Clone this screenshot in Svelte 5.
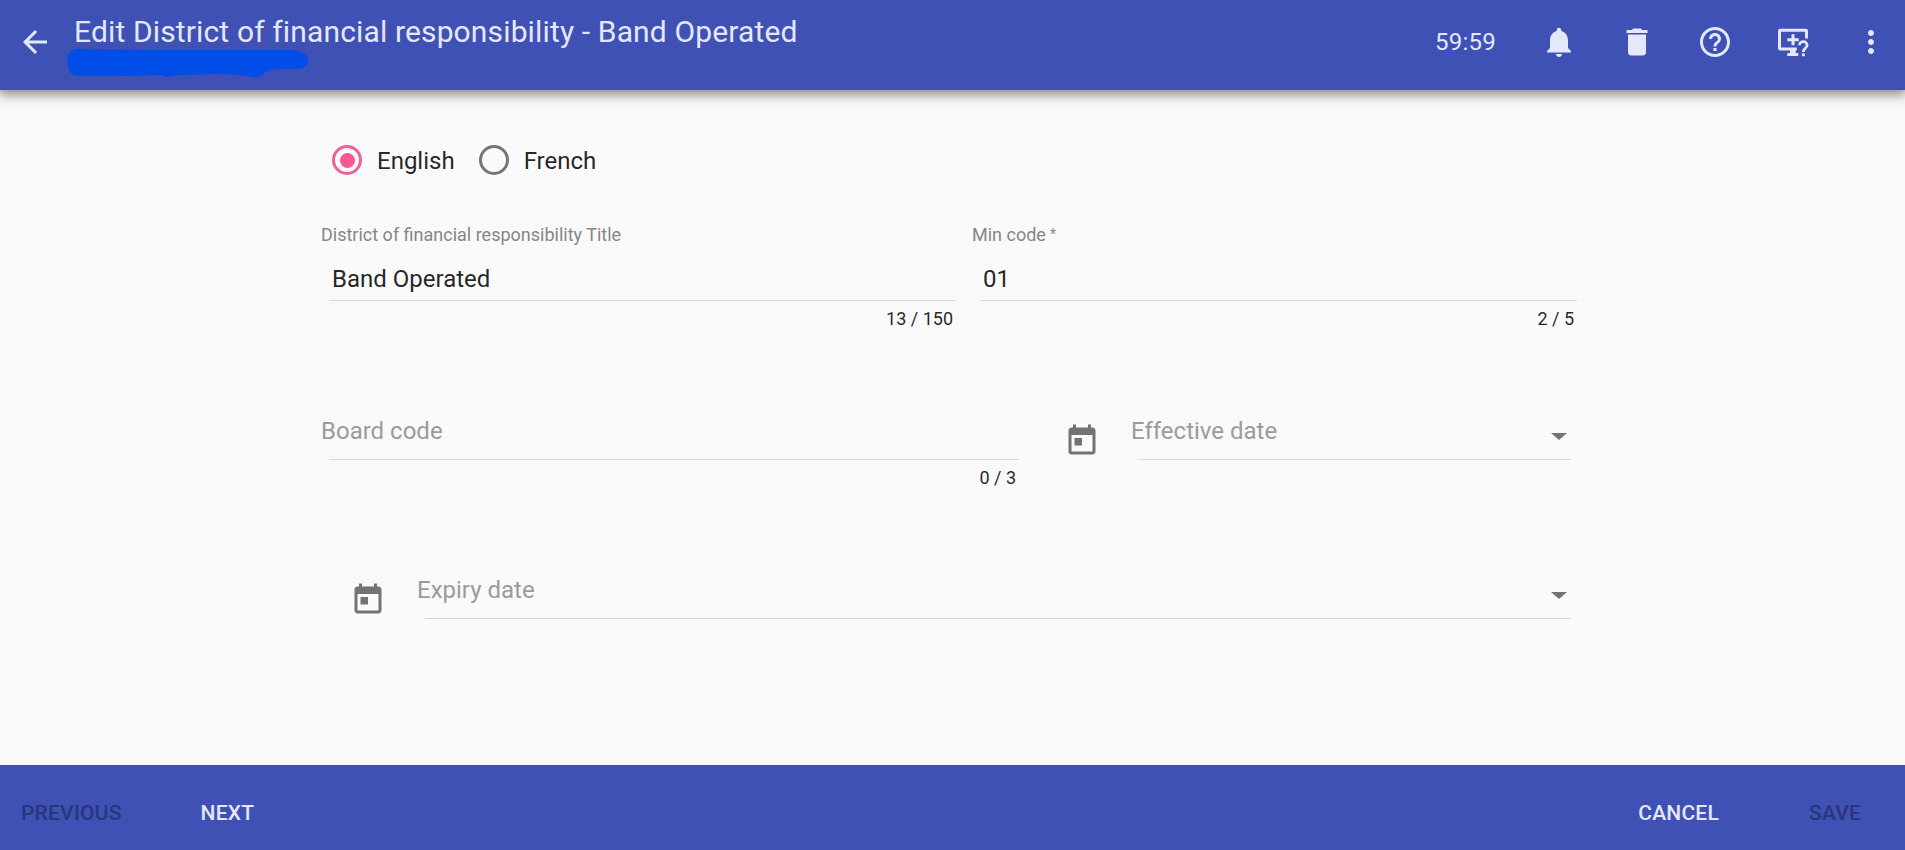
<script>
  const language = 'English';
  const languages = ['English', 'French'];
</script>

{#snippet calendar()}
  <svg class="calendar" viewBox="0 0 24 24"><path d="M19 3h-1V1h-2v2H8V1H6v2H5c-1.11 0-1.99.9-1.99 2L3 19c0 1.1.89 2 2 2h14c1.1 0 2-.9 2-2V5c0-1.1-.9-2-2-2zm0 16H5V8h14v11zM7 10h5v5H7z" /></svg>
{/snippet}

<div class="page">
  <header>
    <svg class="icon back" viewBox="0 0 24 24"><path d="M20 11H7.83l5.59-5.59L12 4l-8 8 8 8 1.41-1.41L7.83 13H20v-2z" /></svg>
    <div class="heading">
      <h1>Edit District of financial responsibility - Band Operated</h1>
      <svg class="marker" viewBox="0 0 246 32"><path d="M10 1 L95 2 L228 2 Q233 3 237 5 Q243 8 242 14 Q240 21 230 21 Q210 20 199 24 Q196 31 186 29 Q174 26 150 26 L110 27 Q103 31 95 27 L50 28 L10 28 Q2 26 2 15 Q-2 4 10 1Z" /></svg>
    </div>
    <div class="actions">
      <span class="timer">59:59</span>
      <svg class="icon" viewBox="0 0 24 24"><path d="M12 22c1.1 0 2-.9 2-2h-4c0 1.1.89 2 2 2zm6-6v-5c0-3.07-1.64-5.64-4.5-6.32V4c0-.83-.67-1.5-1.5-1.5s-1.5.67-1.5 1.5v.68C7.63 5.36 6 7.92 6 11v5l-2 2v1h16v-1l-2-2z" /></svg>
      <svg class="icon" viewBox="0 0 24 24"><path d="M6 19c0 1.1.9 2 2 2h8c1.1 0 2-.9 2-2V7H6v12zM19 4h-3.5l-1-1h-5l-1 1H5v2h14V4z" /></svg>
      <svg class="icon" viewBox="0 0 24 24"><path d="M11 18h2v-2h-2v2zm1-16C6.48 2 2 6.48 2 12s4.48 10 10 10 10-4.48 10-10S17.52 2 12 2zm0 18c-4.41 0-8-3.59-8-8s3.59-8 8-8 8 3.590 8 8-3.590 8-8 8zm0-14c-2.210 0-4 1.790-4 4h2c0-1.100.9-2 2-2s2 .9 2 2c0 2-3 1.750-3 5h2c0-2.250 3-2.500 3-5 0-2.210-1.790-4-4-4z" /></svg>
      <svg class="icon" viewBox="0 0 24 24">
        <path d="M3.500 3.200h17c.9 0 1.500.6 1.500 1.500v4.900h-2V5.200H4v10.500h10.500v2h-.7v1.600h1.700v2H8.200v-2h1.800v-1.600H3.500c-.9 0-1.500-.6-1.500-1.500V4.700c0-.9.6-1.500 1.500-1.500zM11 6.800h2v2.700h2.800v2H13v2.700h-2v-2.700H8.200v-2H11z" />
        <path class="stroke" d="M16.300 14.200c0-3.400 5.100-3.200 5.100-.1 0 2.100-2.500 2.200-2.500 4.600" />
        <path d="M17.900 19.600h2v1.900h-2z" />
      </svg>
      <svg class="icon" viewBox="0 0 24 24"><path d="M12 8c1.100 0 2-.9 2-2s-.9-2-2-2-2 .9-2 2 .9 2 2 2zm0 2c-1.100 0-2 .9-2 2s.9 2 2 2 2-.9 2-2-.9-2-2-2zm0 6c-1.100 0-2 .9-2 2s.9 2 2 2 2-.9 2-2-.9-2-2-2z" /></svg>
    </div>
  </header>

  <main>
    <div class="radios">
      {#each languages as name}
        <div class="radio" class:checked={name === language}><i></i><span>{name}</span></div>
      {/each}
    </div>

    <div class="row">
      <div class="field title">
        <div class="label">District of financial responsibility Title</div>
        <div class="value">Band Operated</div>
        <div class="line"></div>
        <div class="count">13 / 150</div>
      </div>
      <div class="field min">
        <div class="label">Min code<span class="star">*</span></div>
        <div class="value">01</div>
        <div class="line"></div>
        <div class="count">2 / 5</div>
      </div>
    </div>

    <div class="row">
      <div class="field board">
        <div class="placeholder">Board code</div>
        <div class="line"></div>
        <div class="count">0 / 3</div>
      </div>
      {@render calendar()}
      <div class="field date">
        <div class="placeholder">Effective date<b></b></div>
        <div class="line"></div>
      </div>
    </div>

    <div class="row expiry">
      {@render calendar()}
      <div class="field date">
        <div class="placeholder">Expiry date<b></b></div>
        <div class="line"></div>
      </div>
    </div>
  </main>

  <footer>
    <span class="disabled">Previous</span>
    <span class="next">Next</span>
    <span class="cancel">Cancel</span>
    <span class="disabled">Save</span>
  </footer>
</div>

<style>
  :global(body) { margin: 0; background: #fafafa; }
  .page {
    width: 1905px; height: 850px; display: flex; flex-direction: column;
    overflow: hidden; background: #fafafa; color: rgba(0, 0, 0, .87);
    font: 24px/30px Roboto, sans-serif; white-space: nowrap;
  }
  header {
    height: 90px; flex: none; box-sizing: border-box; display: flex;
    padding: 0 16px 0 17px; background: #3f51b5; color: #e5e8fb;
    box-shadow: 0 2px 12px 2px rgba(0, 0, 0, .5);
  }
  .icon { width: 36px; height: 36px; flex: none; fill: currentColor; }
  .back { margin: 24px 14px 0 0; }
  .heading { flex: 1; padding: 13px 0 0 7px; }
  h1 { margin: 0; font-size: 30px; line-height: 38px; font-weight: 400; letter-spacing: .14px; }
  .marker { display: block; width: 246px; height: 32px; margin: -3px 0 0 -8px; fill: #004ee7; }
  .actions { display: flex; align-items: center; height: 84px; gap: 42px; }
  .timer { margin-right: 3px; letter-spacing: .24px; }
  .stroke { fill: none; stroke: currentColor; stroke-width: 1.8; }
  main { flex: 1; padding: 55px 328px 0 321px; }
  .radios { display: flex; height: 78px; padding-left: 11px; gap: 24px; }
  .radio { display: flex; height: 30px; gap: 15px; }
  .radio span { padding-top: 1px; }
  .radio i {
    width: 30px; height: 30px; box-sizing: border-box; border: 3px solid #757575;
    border-radius: 50%; display: grid; place-items: center;
  }
  .checked i { border-color: #f0609a; }
  .checked i::after { content: ''; width: 15px; height: 15px; border-radius: 50%; background: #ff5790; }
  .row { display: flex; height: 159px; }
  .field { display: flex; flex-direction: column; }
  .title { width: 635px; margin-right: 16px; }
  .min { width: 605px; }
  .board { width: 698px; }
  .board + .calendar { margin-left: 45px; }
  .date { flex: 1; padding-right: 6px; }
  .label { height: 40px; padding-top: 1px; line-height: 22px; font-size: 18px; color: #868686; }
  .star { margin-left: 4px; font-size: 14px; position: relative; top: -2px; }
  .value { height: 36px; padding-left: 11px; line-height: 30px; }
  .placeholder {
    display: flex; justify-content: space-between; align-items: flex-start; box-sizing: border-box;
    height: 77px; padding-top: 34px; line-height: 30px; color: #9b9b9b;
  }
  .placeholder b { margin: 17px 4px 0 0; border: 8px solid transparent; border-bottom: 0; border-top: 7px solid #737373; }
  .line { height: 1px; margin-left: 8px; background: #d8d8d8; flex: none; }
  .count { padding: 7px 3px 0 0; line-height: 22px; font-size: 18px; text-align: right; }
  .calendar { width: 36px; height: 36px; flex: none; margin: 41px 31px 0 0; fill: #737373; }
  .expiry { padding-left: 29px; }
  footer {
    height: 85px; flex: none; box-sizing: border-box; display: flex; align-items: center;
    padding: 11px 44px 0 21px; background: #3f51b5; color: #e5e8fb;
    font-size: 21px; font-weight: 500; letter-spacing: .21px; text-transform: uppercase;
  }
  .disabled { color: #2a3679; }
  .next { margin-left: 79px; }
  .cancel { margin: 0 90px 0 auto; }
</style>
